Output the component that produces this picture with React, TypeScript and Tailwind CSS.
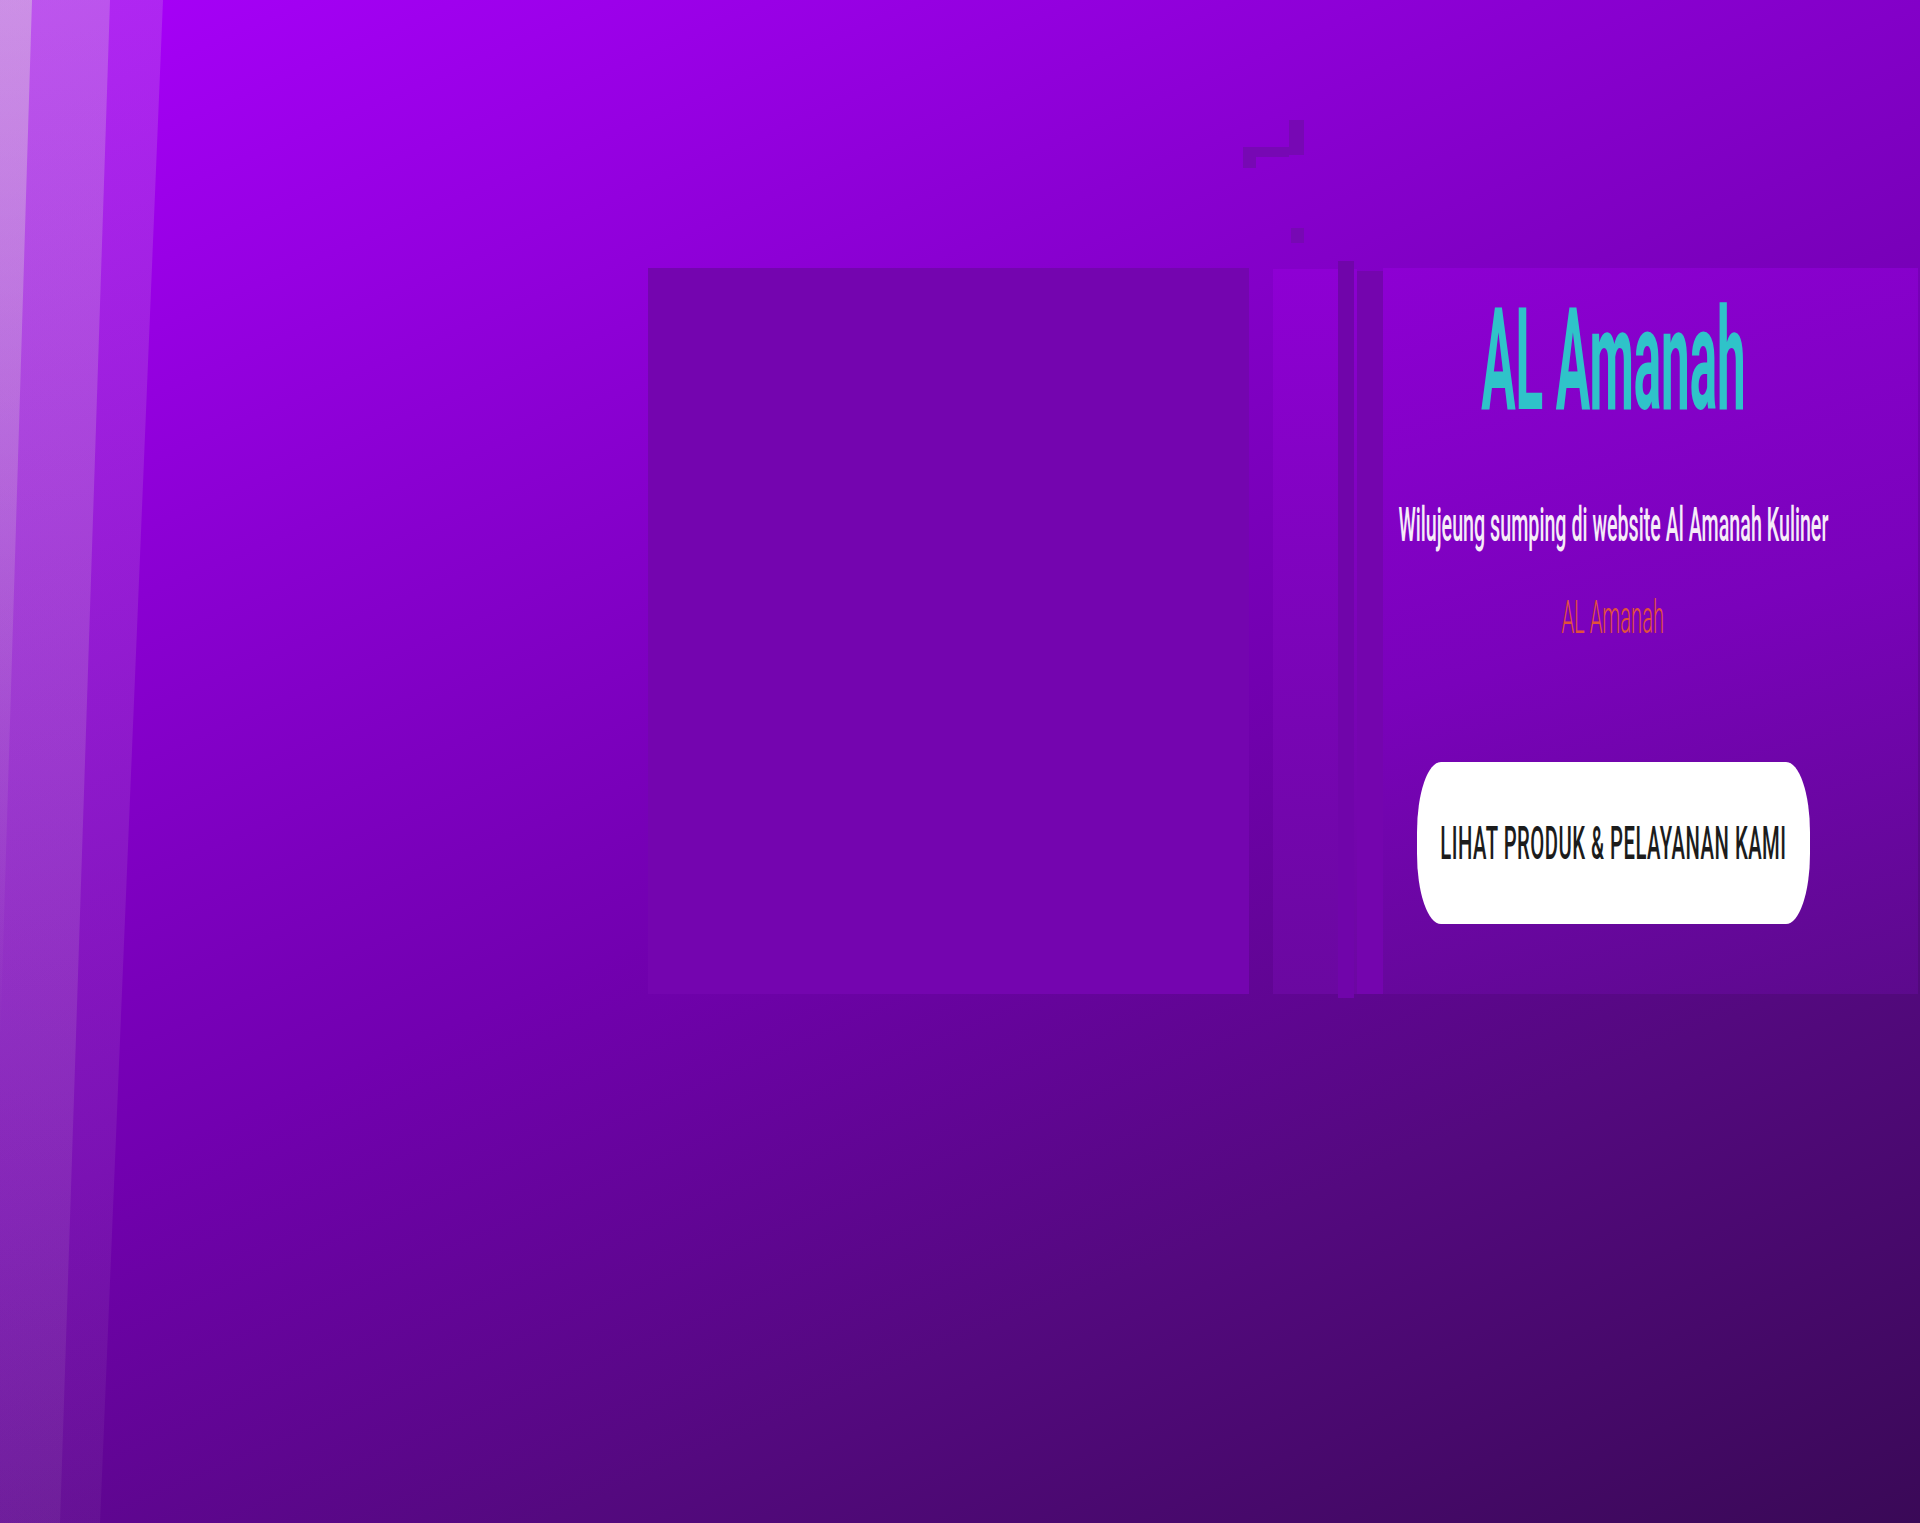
import React from 'react';

const condensed = 'inline-block whitespace-nowrap shrink-0 leading-none font-["Roboto","Noto_Sans",sans-serif]';

function LightBands() {
  // soft diagonal light streaks on the left edge
  return (
    <svg className="absolute left-0 top-0 h-full w-[170px] pointer-events-none" viewBox="0 0 170 1523" preserveAspectRatio="none">
      <defs>
        <linearGradient id="b3" x1="0" y1="0" x2="0" y2="1">
          <stop offset="0" stopColor="#e4f0d8" stopOpacity="0.16" />
          <stop offset="1" stopColor="#e4f0d8" stopOpacity="0.05" />
        </linearGradient>
        <linearGradient id="b2" x1="0" y1="0" x2="0" y2="1">
          <stop offset="0" stopColor="#e4f0d8" stopOpacity="0.23" />
          <stop offset="1" stopColor="#e4f0d8" stopOpacity="0.06" />
        </linearGradient>
        <linearGradient id="b1" x1="0" y1="0" x2="0" y2="1">
          <stop offset="0" stopColor="#e4f0d8" stopOpacity="0.38" />
          <stop offset="0.7" stopColor="#e4f0d8" stopOpacity="0.1" />
          <stop offset="1" stopColor="#e4f0d8" stopOpacity="0" />
        </linearGradient>
      </defs>
      <polygon points="0,0 163,0 100,1523 0,1523" fill="url(#b3)" />
      <polygon points="0,0 110,0 60,1523 0,1523" fill="url(#b2)" />
      <polygon points="0,0 32,0 0,1050" fill="url(#b1)" />
    </svg>
  );
}

export default function App() {
  return (
    <div className="relative min-h-[1523px] w-full overflow-hidden bg-[linear-gradient(157deg,#a800fa_0%,#8a00d2_28%,#7200b0_52%,#54097f_75%,#3a0957_100%)]">
      <LightBands />

      {/* glitch marks above the hero */}
      <div className="absolute left-[1289px] top-[120px] h-[35px] w-[15px] bg-[#7708b4]" />
      <div className="absolute left-[1243px] top-[147px] h-[10px] w-[46px] bg-[#7708b4]" />
      <div className="absolute left-[1243px] top-[157px] h-[11px] w-[13px] bg-[#7708b4]" />
      <div className="absolute left-[1291px] top-[228px] h-[15px] w-[13px] bg-[#7708b4]" />

      <div className="flex items-start pl-[648px] pt-[268px]">
        <div className="h-[726px] w-[601px] bg-[#7405af]" />
        <div className="ml-[24px] mt-px h-[725px] w-[65px] bg-[linear-gradient(180deg,#8e00d4,#6a08a0)]" />
        <div className="-mt-[7px] h-[737px] w-[16px] bg-[#7005aa]" />
        <div className="mt-px h-[725px] w-[3px] bg-[linear-gradient(180deg,#8c00d0,#6c07a2)]" />
        <div className="mt-[3px] h-[723px] w-[26px] bg-[#7405ae]" />
        <div className="mr-[2px] h-[726px] flex-1 bg-[linear-gradient(165deg,#8d00d3_0%,#7a02bb_50%,#5c0a8c_100%)]">
          <div className="flex w-[460px] flex-col items-center pt-[22px]">
            <span className={`${condensed} scale-x-[0.36] text-[142px] font-bold text-[#2fc3c9]`}>AL Amanah</span>
            <span className={`${condensed} mt-[69px] scale-x-[0.41] text-[48px] font-medium text-[#f6ecf8]`}>
              Wilujeung sumping di website Al Amanah Kuliner
            </span>
            <span className={`${condensed} mt-[45px] scale-x-[0.44] text-[46px] font-light text-[#e2523a]`}>AL Amanah</span>
            <button className="mt-[122px] flex h-[162px] w-[393px] items-center justify-center rounded-[24px/70px] bg-white">
              <span className={`${condensed} scale-x-[0.44] text-[46px] font-medium tracking-wide text-[#1c1c1c]`}>
                LIHAT PRODUK &amp; PELAYANAN KAMI
              </span>
            </button>
          </div>
        </div>
      </div>
    </div>
  );
}
